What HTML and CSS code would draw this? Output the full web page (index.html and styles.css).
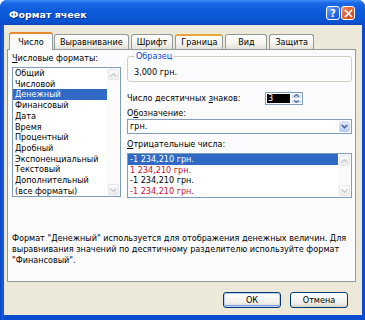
FILE: index.html
```html
<!DOCTYPE html>
<html lang="ru">
<head>
<meta charset="UTF-8">
<meta name="viewport" content="width=device-width, initial-scale=1.0">
<title>Формат ячеек</title>
<link rel="stylesheet" href="styles.css">
</head>
<body>

<div class="window">
  <div class="titlebar">
    <span class="title">Формат ячеек</span>
    <div class="title-btns">
      <span class="tbtn help">?</span>
      <span class="tbtn close">
        <svg width="9" height="9" viewBox="0 0 9 9"><path d="M1.5 1.5L7.5 7.5M7.5 1.5L1.5 7.5" stroke="#fff" stroke-width="1.7" stroke-linecap="square"/></svg>
      </span>
    </div>
  </div>

  <div class="frame">
    <div class="dialog">
      <div class="tabs">
        <span class="tab active">Число</span>
        <span class="tab">Выравнивание</span>
        <span class="tab">Шрифт</span>
        <span class="tab hot">Граница</span>
        <span class="tab">Вид</span>
        <span class="tab">Защита</span>
      </div>

      <div class="panel">
        <div class="cols">
          <div class="col-left">
            <div class="label"><u>Ч</u>исловые форматы:</div>
            <div class="listbox formats">
              <ul class="items">
                <li>Общий</li>
                <li>Числовой</li>
                <li class="selected">Денежный</li>
                <li>Финансовый</li>
                <li>Дата</li>
                <li>Время</li>
                <li>Процентный</li>
                <li>Дробный</li>
                <li>Экспоненциальный</li>
                <li>Текстовый</li>
                <li>Дополнительный</li>
                <li>(все форматы)</li>
              </ul>
              <div class="scrollbar">
                <span class="sb-btn"><svg width="7" height="4" viewBox="0 0 7 4"><path d="M0.5 3.5L3.5 0.7L6.5 3.5" fill="none" stroke="#c3c7cf" stroke-width="1.2"/></svg></span>
                <span class="sb-btn"><svg width="7" height="4" viewBox="0 0 7 4"><path d="M0.5 0.5L3.5 3.3L6.5 0.5" fill="none" stroke="#c3c7cf" stroke-width="1.2"/></svg></span>
              </div>
            </div>
          </div>

          <div class="col-right">
            <fieldset class="sample">
              <legend>Образец</legend>
              3,000 грн.
            </fieldset>

            <div class="decimals">
              <span class="label">Число десятичных <u>з</u>наков:</span>
              <span class="spinner">
                <span class="spin-val"><span class="sel">3</span></span>
                <span class="spin-btns">
                  <span class="spin-btn"><svg width="5" height="3" viewBox="0 0 5 3"><path d="M0.3 2.7L2.5 0.6L4.7 2.7" fill="none" stroke="#4d6185" stroke-width="1.1"/></svg></span>
                  <span class="spin-btn"><svg width="5" height="3" viewBox="0 0 5 3"><path d="M0.3 0.3L2.5 2.4L4.7 0.3" fill="none" stroke="#4d6185" stroke-width="1.1"/></svg></span>
                </span>
              </span>
            </div>

            <div class="label symbol-label">О<u>б</u>означение:</div>
            <div class="combo">
              <span class="combo-val">грн.</span>
              <span class="combo-btn"><svg width="7" height="5" viewBox="0 0 7 5"><path d="M0.8 1L3.5 3.7L6.2 1" fill="none" stroke="#4d6185" stroke-width="1.6"/></svg></span>
            </div>

            <div class="label neg-label"><u>О</u>трицательные числа:</div>
            <div class="listbox negatives">
              <ul class="items">
                <li class="selected">-1 234,210 грн.</li>
                <li class="red">1 234,210 грн.</li>
                <li>-1 234,210 грн.</li>
                <li class="red">-1 234,210 грн.</li>
              </ul>
              <div class="scrollbar">
                <span class="sb-btn"><svg width="7" height="4" viewBox="0 0 7 4"><path d="M0.5 3.5L3.5 0.7L6.5 3.5" fill="none" stroke="#c3c7cf" stroke-width="1.2"/></svg></span>
                <span class="sb-btn"><svg width="7" height="4" viewBox="0 0 7 4"><path d="M0.5 0.5L3.5 3.3L6.5 0.5" fill="none" stroke="#c3c7cf" stroke-width="1.2"/></svg></span>
              </div>
            </div>
          </div>
        </div>

        <p class="desc">Формат "Денежный" используется для отображения денежных величин. Для<br>выравнивания значений по десятичному разделителю используйте формат<br>"Финансовый".</p>
      </div>

      <div class="buttons">
        <button class="btn default">ОК</button>
        <button class="btn">Отмена</button>
      </div>
    </div>
  </div>
</div>

</body>
</html>
```

FILE: styles.css
```css
body, html {
  margin: 0;
  padding: 0;
  font-family: "DejaVu Sans", Arial, sans-serif;
  font-size: 8.1px;
  color: #000;
}

.window {
  width: 365px;
  height: 320px;
  display: flex;
  flex-direction: column;
  background: #0b4ccf;
  border-radius: 7px 7px 0 0;
  overflow: hidden;
}

/* title bar */
.titlebar {
  height: 25px;
  flex: none;
  display: flex;
  align-items: center;
  justify-content: space-between;
  padding: 3px 10px 0 9px;
  box-sizing: border-box;
  background: linear-gradient(#3e8cf6 0%, #1b69e6 12%, #0c5ad9 45%, #0a53d2 85%, #0848c0 100%);
}

.title {
  color: #fff;
  font-weight: bold;
  font-size: 9.5px;
  text-shadow: 1px 1px 0 #0a2a8a;
}

.title-btns {
  display: flex;
  gap: 1px;
  margin-top: -2px;
}

.tbtn {
  width: 14px;
  height: 14px;
  box-sizing: border-box;
  border: 1px solid #fff;
  border-radius: 3px;
  display: flex;
  align-items: center;
  justify-content: center;
  color: #fff;
  font-weight: bold;
  font-size: 10px;
}

.help {
  background: linear-gradient(135deg, #6aa2ff, #2b68e8 60%, #1d55d6);
}

.close {
  background: linear-gradient(135deg, #f28a63, #e05a2c 55%, #c8401a);
}

/* frame + dialog */
.frame {
  flex: 1;
  display: flex;
  padding: 0 3px 5px 4px;
  background: linear-gradient(to right, #0a44c4, #1a5ee0 3px, #0b4ccf 4px);
}

.dialog {
  flex: 1;
  background: #ece9d8;
}

.tabs {
  display: flex;
  align-items: flex-end;
  height: 24px;
  padding-left: 5px;
}

.tab {
  height: 15px;
  min-width: 42px;
  box-sizing: border-box;
  padding: 2px 5px 0;
  margin-right: 2px;
  border: 1px solid #919b9c;
  border-bottom: none;
  border-radius: 3px 3px 0 0;
  background: linear-gradient(#ffffff, #f4f3ee 60%, #e3e1d6);
  text-align: center;
  white-space: nowrap;
}

.tab.hot {
  border-top: 2px solid #e8a53c;
  padding-top: 1px;
}

.tab.active {
  height: 18px;
  min-width: 44px;
  margin-right: 1px;
  margin-bottom: -1px;
  padding-top: 3px;
  background: #fcfcfe;
  border-top: 2px solid #e68b2c;
  position: relative;
  z-index: 1;
}

.panel {
  margin-left: 3px;
  width: 349px;
  height: 233px;
  box-sizing: border-box;
  background: #fcfcfe;
  border: 1px solid #919b9c;
  padding: 3px 3px 0 4px;
}

.cols {
  display: flex;
  gap: 6px;
}

.col-left {
  width: 109px;
}

.col-right {
  width: 225px;
  display: flex;
  flex-direction: column;
}

.label {
  line-height: 11px;
  white-space: nowrap;
}

.col-left .label {
  margin-bottom: 3px;
}

/* list boxes */
.listbox {
  display: flex;
  box-sizing: border-box;
  background: #fff;
  border: 1px solid #7f9db9;
}

.formats {
  height: 130px;
}

.items {
  list-style: none;
  margin: 0;
  padding: 0;
  flex: 1;
}

.items li {
  line-height: 10.7px;
  padding-left: 2px;
  white-space: nowrap;
}

.items li.selected {
  background: #316ac5;
  color: #fff;
}

.items li.red {
  color: #c8102e;
}

.scrollbar {
  width: 13px;
  display: flex;
  flex-direction: column;
  justify-content: space-between;
  align-items: center;
  background: #fbfbf9;
  padding: 1px 0;
  box-sizing: border-box;
}

.sb-btn {
  width: 11px;
  height: 11px;
  box-sizing: border-box;
  border: 1px solid #e3e6ee;
  border-radius: 2px;
  background: linear-gradient(#fbfbfb, #eeede8);
  display: flex;
  align-items: center;
  justify-content: center;
}

/* sample group */
.sample {
  margin: -2px 0 0;
  padding: 5px 6px 3px;
  border: 1px solid #d0d0bf;
  border-radius: 3px;
  line-height: 11px;
}

.sample legend {
  color: #0046d5;
  padding: 0 1px;
  margin-left: 1px;
  line-height: 11px;
}

.decimals {
  display: flex;
  align-items: center;
  margin-top: 10px;
  height: 13px;
}

.decimals .label {
  width: 138px;
}

.spinner {
  display: flex;
  height: 13px;
  width: 38px;
  box-sizing: border-box;
  border: 1px solid #7f9db9;
  background: #fff;
}

.spin-val {
  flex: 1;
  padding: 1px;
  display: flex;
}

.sel {
  flex: 1;
  background: #000;
  color: #fff;
  line-height: 9px;
  padding-left: 1px;
}

.spin-btns {
  width: 11px;
  display: flex;
  flex-direction: column;
}

.spin-btn {
  flex: 1;
  display: flex;
  align-items: center;
  justify-content: center;
  background: linear-gradient(#dce7fd, #b8cdf8);
  border: 1px solid #fff;
  border-radius: 2px;
}

.symbol-label {
  margin-top: 3px;
}

.combo {
  display: flex;
  height: 15px;
  box-sizing: border-box;
  border: 1px solid #7f9db9;
  background: #fff;
}

.combo-val {
  flex: 1;
  line-height: 13px;
  padding-left: 2px;
}

.combo-btn {
  width: 11px;
  margin: 1px;
  border-radius: 2px;
  background: linear-gradient(#dfe8fd, #b6cbf7);
  display: flex;
  align-items: center;
  justify-content: center;
}

.neg-label {
  margin-top: 5px;
}

.negatives {
  margin-top: 3px;
  height: 45px;
}

.desc {
  margin: 35px 0 0;
  line-height: 10.8px;
  white-space: nowrap;
}

/* bottom buttons */
.buttons {
  display: flex;
  justify-content: flex-end;
  gap: 9px;
  padding: 10px 14px 0 0;
}

.btn {
  width: 58px;
  height: 16px;
  padding: 0;
  font: inherit;
  color: #000;
  border: 1px solid #003c74;
  border-radius: 3px;
  background: linear-gradient(#ffffff, #f0efe9 70%, #d8d3c7);
}

.btn.default {
  box-shadow: inset 0 0 0 1px #b9d1fa, inset 0 -1px 0 1px #7d9cf0;
}
```
